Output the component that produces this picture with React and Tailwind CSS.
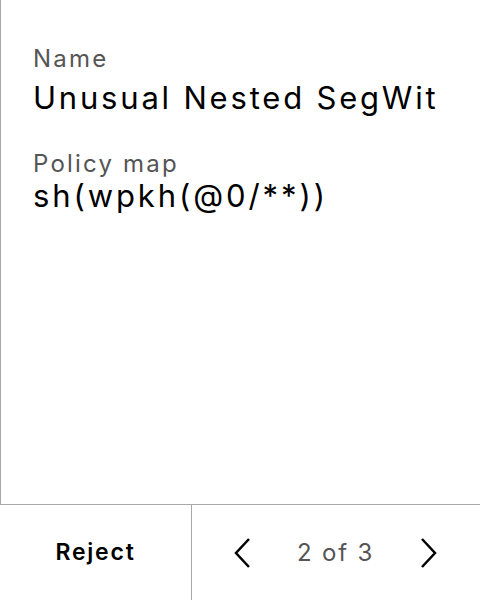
export default function App() {
  return (
    <div
      className="flex h-[600px] w-[480px] flex-col bg-white text-black"
      style={{ fontFamily: "Inter, 'Noto Sans', sans-serif" }}
    >
      <div className="flex-1 border-b border-l border-[#a8a8a8] px-8 pt-[45px]">
        <p className="text-[24px] leading-[28px] tracking-[2.2px] text-[#555555]">Name</p>
        <p className="mt-[7px] text-[31px] leading-[36px] tracking-[2.8px]">Unusual Nested SegWit</p>
        <p className="mt-[34px] text-[24px] leading-[28px] tracking-[2.2px] text-[#555555]">Policy map</p>
        <p className="text-[31px] leading-[36px] tracking-[2.9px]">sh(wpkh(@0/**))</p>
      </div>
      <div className="flex h-[95px]">
        <button className="flex w-[192px] items-center justify-center border-r border-[#a8a8a8] text-[23px] font-semibold tracking-[1.8px]">
          Reject
        </button>
        <div className="flex flex-1 items-center justify-between pl-[40px] pr-[41px]">
          <svg width="20" height="32" viewBox="0 0 20 32" fill="none" stroke="black" strokeWidth="2.5">
            <path d="M17 2 L4 16 L17 30" />
          </svg>
          <span className="text-[24px] tracking-[1.8px] text-[#555555]">2 of 3</span>
          <svg width="20" height="32" viewBox="0 0 20 32" fill="none" stroke="black" strokeWidth="2.5">
            <path d="M3 2 L16 16 L3 30" />
          </svg>
        </div>
      </div>
    </div>
  );
}
